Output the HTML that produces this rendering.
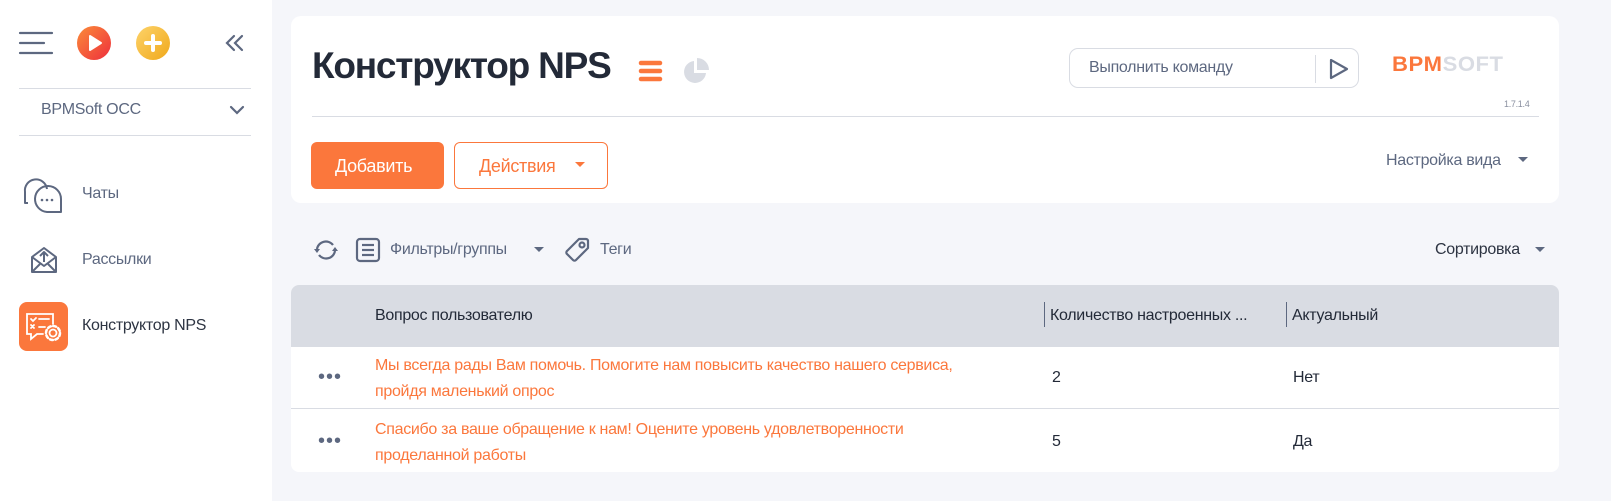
<!DOCTYPE html>
<html><head><meta charset="utf-8">
<style>
*{margin:0;padding:0;box-sizing:border-box}
body{width:1611px;height:501px;overflow:hidden;background:#f5f6fa;font-family:"Liberation Sans",sans-serif;position:relative;color:#2d3442}
.a{position:absolute}
.side{left:0;top:0;width:272px;height:501px;background:#fff}
.t{white-space:nowrap;letter-spacing:-0.3px}
</style></head><body>
<div class="a side"></div>
<svg class="a" style="left:18px;top:30px" width="36" height="26"><g stroke="#5d6880" stroke-width="2.2" stroke-linecap="round"><line x1="2" y1="3" x2="34" y2="3"/><line x1="2" y1="13" x2="26" y2="13"/><line x1="2" y1="23" x2="34" y2="23"/></g></svg>
<svg class="a" style="left:77px;top:26px" width="34" height="34"><defs><linearGradient id="g1" x1="0" y1="0" x2="1" y2="1"><stop offset="0" stop-color="#fb8c3a"/><stop offset="1" stop-color="#ee2f3c"/></linearGradient><linearGradient id="g2" x1="0" y1="0" x2="1" y2="1"><stop offset="0" stop-color="#fdd36a"/><stop offset="1" stop-color="#f0a81a"/></linearGradient></defs><circle cx="17" cy="17" r="17" fill="url(#g1)"/><path d="M13 10 L24 17 L13 24Z" fill="#fff" stroke="#fff" stroke-width="2" stroke-linejoin="round"/></svg>
<svg class="a" style="left:136px;top:26px" width="34" height="34"><circle cx="17" cy="17" r="17" fill="url(#g2)"/><g stroke="#fff" stroke-width="4" stroke-linecap="round"><line x1="17" y1="10" x2="17" y2="24"/><line x1="10" y1="17" x2="24" y2="17"/></g></svg>
<svg class="a" style="left:224px;top:34px" width="22" height="18"><g stroke="#5d6880" stroke-width="2.2" fill="none" stroke-linecap="round"><path d="M10 2 L3 9 L10 16"/><path d="M18 2 L11 9 L18 16"/></g></svg>
<div class="a" style="left:19px;top:88px;width:232px;height:1px;background:#d9dce3"></div>
<div class="a t" style="left:41px;top:101px;font-size:16px;color:#5d6880">BPMSoft OCC</div>
<svg class="a" style="left:229px;top:104px" width="16" height="12"><path d="M2 3 L8 9 L14 3" stroke="#5d6880" stroke-width="2.2" fill="none" stroke-linecap="round"/></svg>
<div class="a" style="left:19px;top:135px;width:232px;height:1px;background:#d9dce3"></div>
<svg class="a" style="left:15px;top:170px" width="50" height="48"><g stroke="#5d6880" stroke-width="2" fill="none" stroke-linejoin="round"><path d="M13 33 L10 33 L10 22 A11 11 0 0 1 32 19"/><path d="M46 42 L60 42 L60 29 A13 13 0 1 0 46 42Z" transform="translate(-14,0)"/></g><g fill="#5d6880"><circle cx="27" cy="30" r="1.3"/><circle cx="32" cy="30" r="1.3"/><circle cx="37" cy="30" r="1.3"/></g></svg>
<div class="a t" style="left:82px;top:185px;font-size:16px;color:#5d6880">Чаты</div>
<svg class="a" style="left:30px;top:246px" width="28" height="28"><g stroke="#5d6880" stroke-width="2" fill="none" stroke-linejoin="round"><path d="M2 11 L14 2 L26 11 L26 26 L2 26Z"/><path d="M2 11 L14 20 L26 11"/><path d="M2 26 L10 18 M26 26 L18 18"/><path d="M14 16 L14 7 M10 10 L14 6 L18 10"/></g></svg>
<div class="a t" style="left:82px;top:251px;font-size:16px;color:#5d6880">Рассылки</div>
<div class="a" style="left:19px;top:302px;width:49px;height:49px;border-radius:8px;background:#fb773c"></div>
<svg class="a" style="left:19px;top:302px" width="49" height="49"><g stroke="#fff" stroke-width="1.8" fill="none" stroke-linecap="round"><path d="M34 22 L34 12 L8 12 L8 32 L12 32 L12 37 L18 32 L24 32"/><path d="M12 17 l2 2 l3 -3 M20 17 L30 17"/><path d="M12 23 l3 3 M15 23 l-3 3 M20 25 L26 25"/><circle cx="34" cy="31" r="3.5"/><circle cx="34" cy="31" r="7" stroke-dasharray="3 2.5" stroke-width="2.5"/></g></svg>
<div class="a t" style="left:82px;top:317px;font-size:16px;color:#2d3442">Конструктор NPS</div>

<div class="a" style="left:291px;top:16px;width:1268px;height:187px;background:#fff;border-radius:10px"></div>
<div class="a t" style="left:312px;top:45px;font-size:37px;font-weight:bold;color:#232a38;letter-spacing:-1.2px">Конструктор NPS</div>
<svg class="a" style="left:638px;top:60px" width="26" height="22"><g stroke="#fb773c" stroke-width="4.5" stroke-linecap="round"><line x1="3" y1="3" x2="22" y2="3"/><line x1="3" y1="11" x2="22" y2="11"/><line x1="3" y1="19" x2="22" y2="19"/></g></svg>
<svg class="a" style="left:683px;top:58px" width="26" height="26"><path d="M11 3 A11 11 0 1 0 23 15 L11 15Z" fill="#d9dce3"/><path d="M14 0 L14 12 L26 12 A12 12 0 0 0 14 0Z" fill="#d9dce3"/></svg>
<div class="a" style="left:312px;top:116px;width:1227px;height:1px;background:#d9dce3"></div>
<div class="a" style="left:1069px;top:48px;width:290px;height:40px;border:1px solid #d9dce3;border-radius:9px"></div>
<div class="a t" style="left:1089px;top:59px;font-size:16px;color:#5d6880">Выполнить команду</div>
<div class="a" style="left:1315px;top:55px;width:1px;height:28px;background:#d9dce3"></div>
<svg class="a" style="left:1327px;top:56px" width="24" height="26"><path d="M4 4 L20 13 L4 22Z" stroke="#5d6880" stroke-width="2.2" fill="none" stroke-linejoin="round"/></svg>
<div class="a t" style="left:1392px;top:53px;font-size:21px;font-weight:900;letter-spacing:0.5px;transform:scaleX(1.05);transform-origin:left"><span style="color:#fb773c">BPM</span><span style="color:#d9dce3">SOFT</span></div>
<div class="a t" style="left:1504px;top:99px;font-size:9px;color:#8a90a0">1.7.1.4</div>
<div class="a" style="left:311px;top:142px;width:133px;height:47px;background:#fb773c;border-radius:6px"></div>
<div class="a t" style="left:335px;top:156px;font-size:18px;color:#fff">Добавить</div>
<div class="a" style="left:454px;top:142px;width:154px;height:47px;border:1px solid #fb773c;border-radius:6px"></div>
<div class="a t" style="left:479px;top:156px;font-size:18px;color:#fb773c">Действия</div>
<svg class="a" style="left:574px;top:161px" width="12" height="8"><path d="M1 1 L11 1 L6 6Z" fill="#fb773c"/></svg>
<div class="a t" style="left:1386px;top:152px;font-size:16px;color:#5d6880">Настройка вида</div>
<svg class="a" style="left:1517px;top:156px" width="12" height="8"><path d="M1 1 L11 1 L6 6Z" fill="#5d6880"/></svg>

<svg class="a" style="left:313px;top:238px" width="26" height="24"><g stroke="#5d6880" stroke-width="2.2" fill="none"><path d="M4 11 A9 9 0 0 1 20 7"/><path d="M22 13 A9 9 0 0 1 6 17"/></g><path d="M1 11 L7 11 L4 15Z M25 13 L19 13 L22 9Z" fill="#5d6880"/></svg>
<svg class="a" style="left:355px;top:237px" width="26" height="26"><g stroke="#5d6880" stroke-width="2.2" fill="none"><rect x="2" y="2" width="22" height="22" rx="3"/><line x1="7" y1="8" x2="19" y2="8"/><line x1="7" y1="13" x2="19" y2="13"/><line x1="7" y1="18" x2="19" y2="18"/></g></svg>
<div class="a t" style="left:390px;top:241px;font-size:16px;color:#5d6880">Фильтры/группы</div>
<svg class="a" style="left:533px;top:246px" width="12" height="8"><path d="M1 1 L11 1 L6 6Z" fill="#5d6880"/></svg>
<svg class="a" style="left:564px;top:237px" width="26" height="26"><g stroke="#5d6880" stroke-width="2.2" fill="none" stroke-linejoin="round"><path d="M15 2 L22 2 A2 2 0 0 1 24 4 L24 11 L12 23 A2 2 0 0 1 9 23 L3 17 A2 2 0 0 1 3 14Z"/><circle cx="18" cy="8" r="2.5"/></g></svg>
<div class="a t" style="left:600px;top:241px;font-size:16px;color:#5d6880">Теги</div>
<div class="a t" style="left:1435px;top:241px;font-size:16px;color:#2d3442">Сортировка</div>
<svg class="a" style="left:1534px;top:246px" width="12" height="8"><path d="M1 1 L11 1 L6 6Z" fill="#5d6880"/></svg>

<div class="a" style="left:291px;top:285px;width:1268px;height:187px;background:#fff;border-radius:8px;overflow:hidden">
 <div style="height:62px;background:#d9dce3"></div>
 <div style="position:absolute;top:123px;left:0;width:100%;height:1px;background:#d9dce3"></div>
</div>
<div class="a t" style="left:375px;top:307px;font-size:16px;color:#232a38">Вопрос пользователю</div>
<div class="a" style="left:1044px;top:302px;width:1px;height:25px;background:#5d6880"></div>
<div class="a t" style="left:1050px;top:307px;font-size:16px;color:#232a38">Количество настроенных ...</div>
<div class="a" style="left:1286px;top:302px;width:1px;height:25px;background:#5d6880"></div>
<div class="a t" style="left:1292px;top:307px;font-size:16px;color:#232a38">Актуальный</div>

<div class="a t" style="left:318px;top:366px;font-size:20px;color:#5d6880;letter-spacing:1px">•••</div>
<div class="a t" style="left:375px;top:353px;font-size:16px;line-height:26px;color:#fb773c">Мы всегда рады Вам помочь. Помогите нам повысить качество нашего сервиса,<br>пройдя маленький опрос</div>
<div class="a t" style="left:1052px;top:369px;font-size:16px;color:#232a38">2</div>
<div class="a t" style="left:1293px;top:369px;font-size:16px;color:#232a38">Нет</div>

<div class="a t" style="left:318px;top:430px;font-size:20px;color:#5d6880;letter-spacing:1px">•••</div>
<div class="a t" style="left:375px;top:417px;font-size:16px;line-height:26px;color:#fb773c">Спасибо за ваше обращение к нам! Оцените уровень удовлетворенности<br>проделанной работы</div>
<div class="a t" style="left:1052px;top:433px;font-size:16px;color:#232a38">5</div>
<div class="a t" style="left:1293px;top:433px;font-size:16px;color:#232a38">Да</div>
</body></html>
